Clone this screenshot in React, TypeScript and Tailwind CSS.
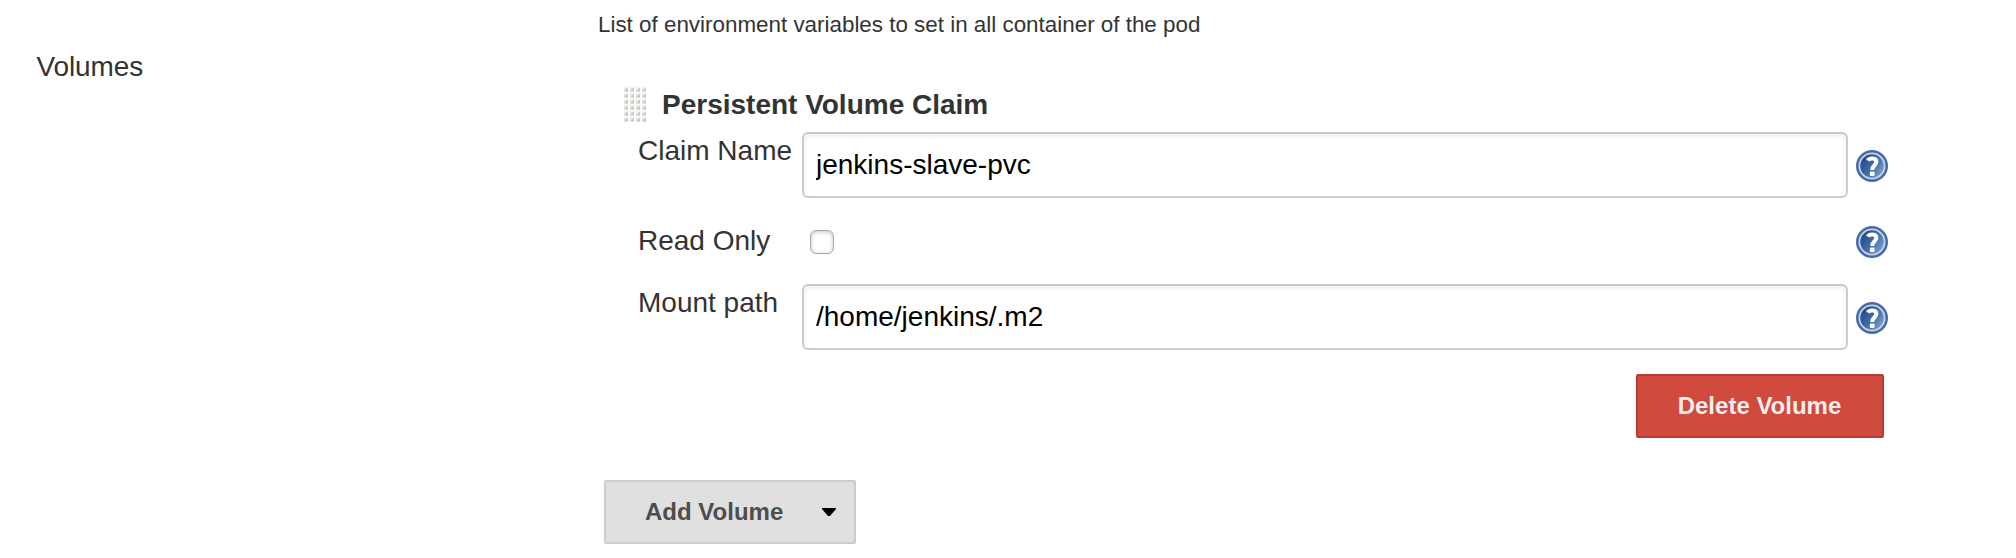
import React from "react";

function HelpIcon() {
  return (
    <svg className="block size-8 shrink-0" viewBox="0 0 32 32" role="img" aria-label="Help">
      <defs>
        <linearGradient id="disc" x1="0" y1="0.15" x2="1" y2="0.85">
          <stop offset="0" stopColor="#1a427f" />
          <stop offset="0.5" stopColor="#416ba6" />
          <stop offset="1" stopColor="#84a8d3" />
        </linearGradient>
      </defs>
      <circle cx="16" cy="16" r="16" fill="#456aa4" />
      <circle cx="16" cy="16" r="12.6" fill="url(#disc)" stroke="#c6d3e6" strokeWidth="1.8" />
      <path
        d="M11.8 10.6C13.6 7.4 20.4 7.6 20.4 11.8C20.4 15.2 16.2 15.4 16.2 20"
        fill="none"
        stroke="#fff"
        strokeWidth="4"
      />
      <rect x="13.9" y="21.6" width="4.6" height="4.4" rx="1" fill="#fff" />
    </svg>
  );
}

function DragHandle() {
  return (
    <svg className="block h-9 w-[22px] shrink-0" viewBox="0 0 22 36" aria-hidden="true">
      <defs>
        <linearGradient id="dot" x1="0" y1="0" x2="1" y2="1">
          <stop offset="0.1" stopColor="#f2f2f0" />
          <stop offset="1" stopColor="#b2b2ae" />
        </linearGradient>
        <pattern id="dots" width="6" height="6" patternUnits="userSpaceOnUse">
          <rect width="6" height="6" fill="#fafaf9" />
          <rect x="0" y="1.6" width="4" height="4" rx="0.6" fill="url(#dot)" />
        </pattern>
      </defs>
      <rect width="22" height="36" fill="url(#dots)" />
    </svg>
  );
}

function TextField({ label, value }: { label: string; value: string }) {
  return (
    <div className="flex h-[66px]">
      <label className="w-[164px] shrink-0 pt-[3px] text-[28px] leading-8 whitespace-nowrap">{label}</label>
      <input
        type="text"
        defaultValue={value}
        aria-label={label}
        className="h-[66px] w-[1046px] rounded-[6px] border-2 border-[#ccc] bg-white px-3 text-[28px] text-black shadow-[inset_0_2px_4px_rgba(0,0,0,0.08)] outline-none"
      />
      <div className="pt-[18px] pl-2">
        <HelpIcon />
      </div>
    </div>
  );
}

export default function App() {
  return (
    <main className="h-[558px] w-[2016px] overflow-hidden bg-white font-['Liberation_Sans',Arial,sans-serif] text-[#333]">
      <div className="flex">
        <div className="w-[598px] shrink-0 pt-[51px] pl-[36.5px] text-[28px] leading-8 tracking-[-0.1px]">Volumes</div>
        <div className="flex w-[1300px] flex-col">
          <p className="mt-[9px] h-8 text-[22.4px] leading-8">
            List of environment variables to set in all container of the pod
          </p>
          <div className="mt-[45px] flex h-[46px] pl-[26px]">
            <DragHandle />
            <h2 className="pt-[3px] pl-4 text-[28px] leading-8 font-bold">Persistent Volume Claim</h2>
          </div>
          <div className="flex flex-col pl-10">
            <TextField label="Claim Name" value="jenkins-slave-pvc" />
            <div className="flex h-[86px] items-start">
              <label className="w-[164px] shrink-0 pt-[27px] text-[28px] leading-8">Read Only</label>
              <div className="w-[1046px] pt-8 pl-2">
                <input
                  type="checkbox"
                  aria-label="Read Only"
                  className="block size-6 appearance-none rounded-[6px] border-[1.5px] border-[#a8a8a8] bg-white shadow-[inset_0_1px_4px_rgba(0,0,0,0.25)]"
                />
              </div>
              <div className="pt-7 pl-2">
                <HelpIcon />
              </div>
            </div>
            <TextField label="Mount path" value="/home/jenkins/.m2" />
          </div>
          <button className="mt-6 mr-[14px] h-16 w-[248px] self-end rounded-[2px] border-2 border-[#b93a30] bg-[#d04a3e] pr-[1px] text-[24px] font-bold text-[#eee]">
            Delete Volume
          </button>
          <button className="mt-[42px] ml-[6px] flex h-16 w-[252px] items-center justify-between rounded-[2px] border-2 border-[#ccc] bg-[#e0e0e0] pr-[18px] pl-[39px] text-[24px] font-bold text-[#4d4d4d]">
            <span>Add Volume</span>
            <svg className="h-2 w-[14px]" viewBox="0 0 14 8" aria-hidden="true">
              <path d="M0 0H14V1L8 8H6L0 1Z" fill="#000" />
            </svg>
          </button>
        </div>
      </div>
    </main>
  );
}
